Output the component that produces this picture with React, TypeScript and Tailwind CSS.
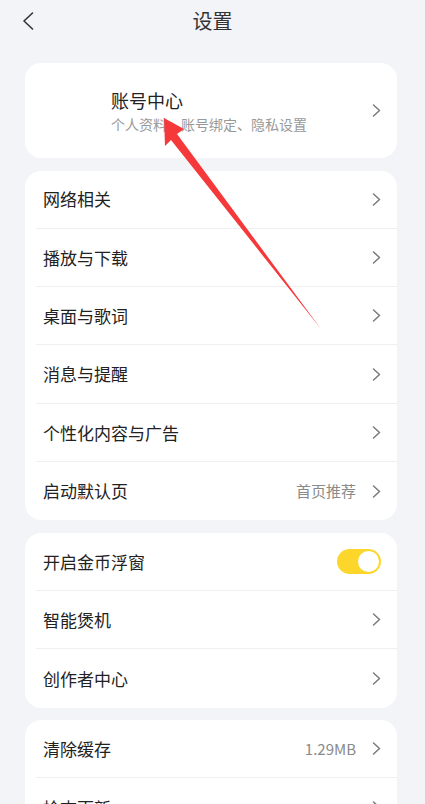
import React from "react";

const font = { fontFamily: '"Noto Sans CJK SC", "Noto Sans", sans-serif' };

function Chevron() {
  return (
    <svg width="9" height="13" viewBox="0 0 9 13" className="shrink-0">
      <polyline
        points="1.5,1 7.5,6.5 1.5,12"
        fill="none"
        stroke="#7a7a7a"
        strokeWidth="1.5"
        strokeLinecap="round"
        strokeLinejoin="round"
      />
    </svg>
  );
}

function Toggle() {
  return (
    <div className="flex h-[25px] w-[44px] items-center justify-end rounded-full bg-[#fdd62b] pr-[2px]">
      <div className="h-[21px] w-[21px] rounded-full bg-white" />
    </div>
  );
}

interface Row {
  label: string;
  value?: string;
  toggle?: boolean;
}

function Group({ rows }: { rows: Row[] }) {
  return (
    <section className="ml-[25px] mr-[28px] overflow-hidden rounded-[16px] bg-white">
      {rows.map((row, i) => (
        <div key={row.label} className="pl-[11px]">
          <div
            className={
              "flex h-[58.3px] items-center justify-between pl-[7px] pr-[16px] " +
              (i < rows.length - 1 ? "border-b border-[#efefef]" : "")
            }
          >
            <span className="text-[17px] text-[#222]">{row.label}</span>
            {row.toggle ? (
              <Toggle />
            ) : (
              <div className="flex items-center gap-[16px]">
                {row.value && (
                  <span className="text-[15px] text-[#8a8a8a]">{row.value}</span>
                )}
                <Chevron />
              </div>
            )}
          </div>
        </div>
      ))}
    </section>
  );
}

export default function App() {
  return (
    <div
      className="relative h-[804px] w-[425px] overflow-hidden bg-[#f3f4f8]"
      style={font}
    >
      {/* Header */}
      <header className="relative flex h-[42px] items-center justify-center">
        <svg
          width="12"
          height="18"
          viewBox="0 0 12 18"
          className="absolute left-[22px] top-[12px]"
        >
          <polyline
            points="10.5,1 2,9 10.5,17"
            fill="none"
            stroke="#333"
            strokeWidth="1.6"
            strokeLinecap="round"
            strokeLinejoin="round"
          />
        </svg>
        <h1 className="text-[20px] text-[#333]">设置</h1>
      </header>

      <div className="mt-[21px] flex flex-col gap-[12.5px]">
        {/* Account card */}
        <section className="ml-[25px] mr-[28px] flex h-[95px] items-center justify-between rounded-[16px] bg-white pl-[86px] pr-[16px]">
          <div className="flex flex-col">
            <span className="text-[18px] leading-[25px] text-[#222]">账号中心</span>
            <span className="mt-[2px] text-[14px] leading-[19px] text-[#999]">
              个人资料、账号绑定、隐私设置
            </span>
          </div>
          <Chevron />
        </section>

        <Group
          rows={[
            { label: "网络相关" },
            { label: "播放与下载" },
            { label: "桌面与歌词" },
            { label: "消息与提醒" },
            { label: "个性化内容与广告" },
            { label: "启动默认页", value: "首页推荐" },
          ]}
        />

        <Group
          rows={[
            { label: "开启金币浮窗", toggle: true },
            { label: "智能煲机" },
            { label: "创作者中心" },
          ]}
        />

        <Group
          rows={[
            { label: "清除缓存", value: "1.29MB" },
            { label: "检查更新" },
          ]}
        />
      </div>

      {/* Annotation arrow */}
      <svg
        width="425"
        height="804"
        className="pointer-events-none absolute left-0 top-0"
      >
        <polygon
          points="164,118 184,129 177,134 321,329 171,140 165,146"
          fill="#f5393b"
        />
      </svg>
    </div>
  );
}
